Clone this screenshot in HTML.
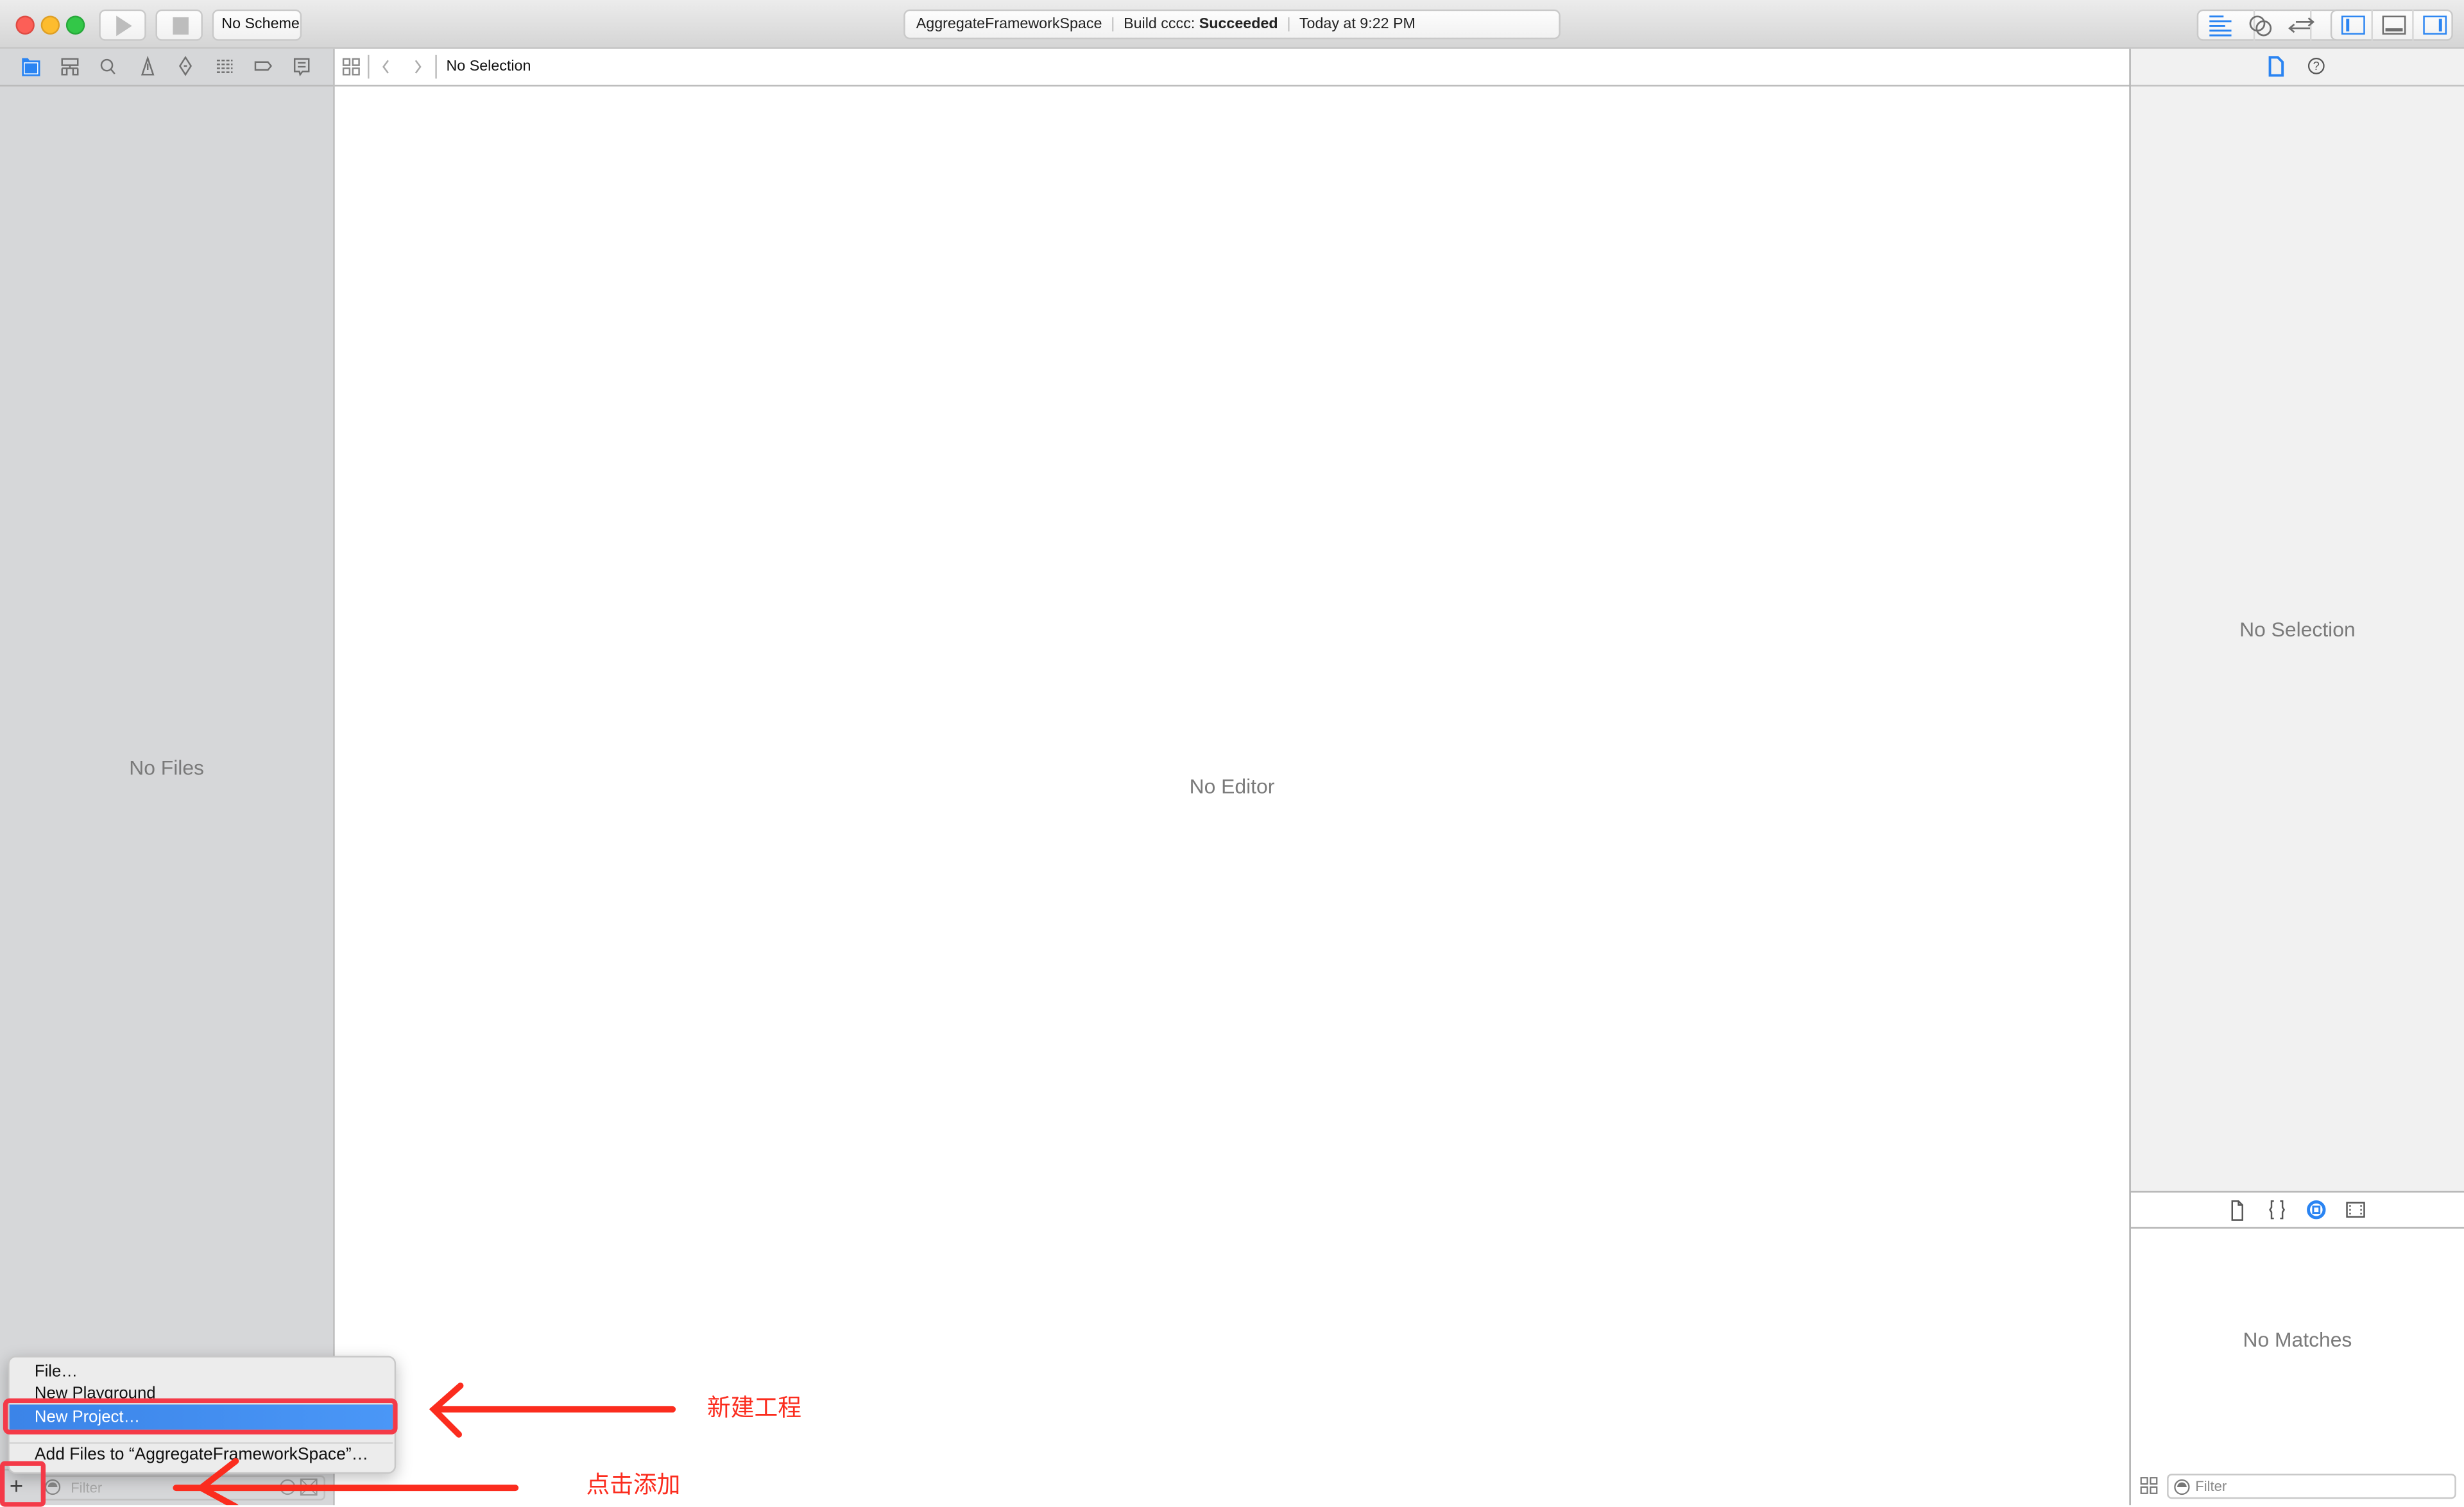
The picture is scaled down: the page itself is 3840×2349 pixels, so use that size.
<!DOCTYPE html>
<html><head><meta charset="utf-8"><style>
html,body{margin:0;padding:0;width:3840px;height:2346px;overflow:hidden;background:#fff}
#w{position:absolute;left:0;top:0;width:1568px;height:958px;transform:scale(2.44898);transform-origin:0 0;font-family:"Liberation Sans","Noto Sans CJK SC",sans-serif;}
.a{position:absolute}
.btn{position:absolute;background:linear-gradient(#fdfdfd,#f1f1f1);border:1px solid #c9c9c9;border-radius:4px;box-sizing:border-box}
.gray{color:#7a7a7a;font-size:13px}
</style></head><body><div id="w">
<!-- title bar -->
<div class="a" style="left:0;top:0;width:1568px;height:30px;background:linear-gradient(#ececec,#d5d5d5);border-bottom:1px solid #c4c4c4"></div>
<div class="a" style="left:10px;top:10px;width:10px;height:10px;border-radius:50%;background:#fc5f57;border:0.5px solid #de4a42"></div>
<div class="a" style="left:26px;top:10px;width:10px;height:10px;border-radius:50%;background:#fdbc2e;border:0.5px solid #de9f25"></div>
<div class="a" style="left:42px;top:10px;width:10px;height:10px;border-radius:50%;background:#33c748;border:0.5px solid #27a83a"></div>
<div class="btn" style="left:63px;top:6px;width:30px;height:20px"><svg class="a" style="left:9px;top:3px" width="12" height="13"><path d="M1 0 L11 6.5 L1 13Z" fill="#bdbdbd"/></svg></div>
<div class="btn" style="left:99px;top:6px;width:30px;height:20px"><div class="a" style="left:10px;top:4px;width:10px;height:11px;background:#bdbdbd"></div></div>
<div class="btn" style="left:135px;top:6px;width:57px;height:20px;font-size:9.5px;line-height:18px;padding-left:5px;color:#111;white-space:nowrap;overflow:hidden">No Scheme</div>
<div class="btn" style="left:575px;top:6px;width:418px;height:19px;font-size:9.5px;line-height:18px;padding-left:7px;color:#222;white-space:nowrap">AggregateFrameworkSpace <span style="color:#bbb;margin:0 3px">|</span> Build cccc: <b>Succeeded</b> <span style="color:#bbb;margin:0 3px">|</span> Today at 9:22 PM</div>
<div class="btn" style="left:1398px;top:6px;width:109px;height:20px"></div>
<div class="a" style="left:1434px;top:6px;width:1px;height:20px;background:#d6d6d6"></div>
<div class="a" style="left:1470px;top:6px;width:1px;height:20px;background:#d6d6d6"></div>
<svg class="a" style="left:1404px;top:9px" width="20" height="15"><g stroke="#2a84f2" stroke-width="1.2"><path d="M2 1.5h9M2 4.5h14M2 7.5h10M2 10.5h14M2 13.5h14"/></g></svg>
<svg class="a" style="left:1430px;top:7px" width="18" height="18"><g fill="none" stroke="#6e6e6e" stroke-width="1.1"><circle cx="6.5" cy="8" r="4.5"/><circle cx="10.5" cy="11" r="4.5"/></g></svg>
<svg class="a" style="left:1456px;top:8px" width="18" height="16"><g fill="none" stroke="#6e6e6e" stroke-width="1.1"><path d="M5 10h13M8 12.5l-3-2.5 3-2.5" transform="translate(-4 0)"/><path d="M5 6h11M13 3.5l3 2.5-3 2.5"/></g></svg>
<div class="btn" style="left:1483px;top:6px;width:78px;height:20px"></div>
<div class="a" style="left:1509px;top:6px;width:1px;height:20px;background:#d6d6d6"></div>
<div class="a" style="left:1535px;top:6px;width:1px;height:20px;background:#d6d6d6"></div>
<div class="a" style="left:1490px;top:10px;width:13px;height:10px;border:1.2px solid #2a84f2"></div><div class="a" style="left:1493px;top:12px;width:2px;height:8px;background:#2a84f2"></div>
<div class="a" style="left:1516px;top:10px;width:13px;height:10px;border:1.2px solid #6e6e6e"></div><div class="a" style="left:1518px;top:18px;width:11px;height:2px;background:#6e6e6e"></div>
<div class="a" style="left:1542px;top:10px;width:13px;height:10px;border:1.2px solid #2a84f2"></div><div class="a" style="left:1552px;top:12px;width:2px;height:8px;background:#2a84f2"></div>

<!-- sidebar -->
<div class="a" style="left:0;top:31px;width:212px;height:927px;background:#d6d7d9;border-right:1px solid #bdbdbd"></div>
<div class="a" style="left:0;top:54px;width:212px;height:1px;background:#b9b9b9"></div>
<svg class="a" style="left:0;top:31px" width="212" height="23"><g fill="none" stroke="#707070" stroke-width="1">
<path d="M14.5 6.5h3l1 1.5h6.5v9h-10.5z" fill="#2a84f2" stroke="#2a84f2"/><rect x="15.5" y="9" width="8.5" height="7" fill="#2a84f2" stroke="#fff" stroke-width="0.6"/>
<path d="M39.5 6.5h10v4h-10zM44.5 10.5v2M39.5 12.5h10M39.5 12.5v4h3v-4M46.5 12.5v4h3v-4"/>
<circle cx="68" cy="10.5" r="3.5"/><path d="M70.5 13l2.5 3"/>
<path d="M94 6l3.5 10.5h-7zM94 9.5v4"/>
<path d="M118 5.5l3.5 5.5-3.5 5.5-3.5-5.5zM117 11h2"/>
<path d="M138 7.5h10M138 10h10M138 12.5h10M138 15h10" stroke-dasharray="2 1"/>
<path d="M162.5 8.5h8l2 2.5-2 2.5h-8z"/>
<path d="M187.5 6.5h9v8h-4l-1.5 2-0.5-2h-3zM189.5 9h5M189.5 11.5h5"/>
</g></svg>
<div class="a gray" style="left:0;width:212px;top:481px;text-align:center">No Files</div>

<!-- editor -->
<div class="a" style="left:213px;top:54px;width:1142px;height:1px;background:#b9b9b9"></div>
<svg class="a" style="left:213px;top:31px" width="140" height="23"><g fill="none" stroke="#8a8a8a" stroke-width="1">
<path d="M5.5 6.5h4v4h-4zM11.5 6.5h4v4h-4zM5.5 12.5h4v4h-4zM11.5 12.5h4v4h-4z"/>
<path d="M21.5 4v15M64.5 4v15" stroke="#bbb"/>
<path d="M34 7.5l-3 4 3 4M51.5 7.5l3 4-3 4" stroke="#aaa"/></g></svg>
<div class="a" style="left:284px;top:37px;font-size:9.5px;color:#111">No Selection</div>
<div class="a gray" style="left:213px;width:1142px;top:493px;text-align:center">No Editor</div>

<!-- inspector -->
<div class="a" style="left:1355px;top:31px;width:1px;height:927px;background:#ababab"></div>
<div class="a" style="left:1356px;top:31px;width:212px;height:727px;background:#f1f1f1"></div>
<div class="a" style="left:1356px;top:54px;width:212px;height:1px;background:#c0c0c0"></div>
<svg class="a" style="left:1440px;top:34px" width="45" height="16"><path d="M4.5 2.5h5l3 3v8.5h-8z" fill="none" stroke="#2a84f2" stroke-width="1.6"/><circle cx="34" cy="8" r="4.8" fill="none" stroke="#555" stroke-width="0.9"/><text x="34" y="10.6" font-size="7.5" text-anchor="middle" fill="#555" font-family="Liberation Sans">?</text></svg>
<div class="a gray" style="left:1356px;width:212px;top:393px;text-align:center">No Selection</div>
<div class="a" style="left:1356px;top:758px;width:212px;height:1px;background:#b3b3b3"></div>
<div class="a" style="left:1356px;top:781px;width:212px;height:1px;background:#b3b3b3"></div>
<svg class="a" style="left:1410px;top:762px" width="100" height="16"><g fill="none" stroke="#555" stroke-width="1">
<path d="M10.5 2.5h4l2.5 2.5v9.5h-6.5zM14.5 2.5v2.5h2.5"/>
<path d="M37 2.5h-1.5v4l-1 1.5 1 1.5v4h1.5M41 2.5h1.5v4l1 1.5-1 1.5v4h-1.5"/>
<circle cx="64" cy="8" r="5" stroke="#2a84f2" stroke-width="2"/><rect x="62" y="6" width="4" height="4" stroke="#2a84f2" stroke-width="1.2"/>
<rect x="83.5" y="3.5" width="11" height="9"/><path d="M85 5.5h1M85 8h1M85 10.5h1M92 5.5h1M92 8h1M92 10.5h1"/></g></svg>
<div class="a gray" style="left:1356px;width:212px;top:845px;text-align:center">No Matches</div>
<svg class="a" style="left:1362px;top:940px" width="12" height="12"><g fill="none" stroke="#777" stroke-width="0.9"><rect x="0.5" y="0.5" width="4" height="4"/><rect x="6.5" y="0.5" width="4" height="4"/><rect x="0.5" y="6.5" width="4" height="4"/><rect x="6.5" y="6.5" width="4" height="4"/></g></svg>
<div class="a" style="left:1379px;top:938px;width:184px;height:16px;border:1px solid #c8c8c8;border-radius:3px;box-sizing:border-box;font-size:9px;color:#888;line-height:14px;padding-left:17px">Filter</div>
<svg class="a" style="left:1383px;top:941px" width="11" height="11"><circle cx="5.5" cy="5.5" r="4.5" fill="none" stroke="#777" stroke-width="0.9"/><path d="M2.5 5.5a3 3 0 0 1 6 0z" fill="#777"/></svg>

<!-- sidebar bottom bar -->
<div class="a" style="left:0;top:935px;width:212px;height:1px;background:#c0c0c0"></div>
<div class="a" style="left:6px;top:942px;font-size:15px;color:#444;line-height:10px">+</div>
<div class="a" style="left:26px;top:939px;width:181px;height:16px;border:1px solid #c0c0c0;border-radius:3px;box-sizing:border-box;font-size:9px;color:#aaa;line-height:14px;padding-left:18px">Filter</div>
<svg class="a" style="left:28px;top:941px" width="180" height="12"><circle cx="5.5" cy="5.5" r="4.5" fill="none" stroke="#888" stroke-width="0.9"/><path d="M2.5 5.5a3 3 0 0 1 6 0z" fill="#888"/><circle cx="155" cy="5.5" r="4.5" fill="none" stroke="#999" stroke-width="0.9"/><rect x="163.5" y="0.5" width="10" height="10" fill="none" stroke="#999" stroke-width="0.9"/><path d="M163.5 0.5l10 10M173.5 0.5l-10 10" stroke="#999" stroke-width="0.7"/></svg>

<!-- popup menu -->
<div class="a" style="left:5px;top:863px;width:247px;height:75px;background:#ececec;border:1px solid #c8c8c8;border-radius:5px;box-sizing:border-box;box-shadow:0 3px 10px rgba(0,0,0,0.25)"></div>
<div class="a" style="left:22px;top:867px;font-size:10.5px;color:#111">File…</div>
<div class="a" style="left:22px;top:881px;font-size:10.5px;color:#111">New Playground</div>
<div class="a" style="left:6px;top:891px;width:244px;height:21px;background:#dcdcdc"></div>
<div class="a" style="left:6px;top:894px;width:244px;height:16px;background:linear-gradient(90deg,#3b84e8,#4a97f7);color:#fff;font-size:10.5px;line-height:16px;padding-left:16px;box-sizing:border-box">New Project…</div>
<div class="a" style="left:2px;top:890px;width:251px;height:23px;border:3px solid #f43a48;border-radius:4px;box-sizing:border-box"></div>
<div class="a" style="left:6px;top:918px;width:244px;height:1px;background:#d4d4d4"></div>
<div class="a" style="left:22px;top:920px;font-size:10.8px;color:#111;white-space:nowrap">Add Files to “AggregateFrameworkSpace”…</div>
<div class="a" style="left:0;top:930px;width:29px;height:29px;border:3px solid #f43a48;border-radius:3px;box-sizing:border-box"></div>

<!-- arrows -->
<svg class="a" style="left:0;top:860px" width="450" height="98"><g stroke="#fb2c1e" stroke-width="4" stroke-linecap="round" fill="none">
<path d="M428 37H276M293 22L276 37l16 16"/>
<path d="M328 87H112M150 70L128 87l22 12"/></g></svg>
<div class="a" style="left:450px;top:885px;font-size:15px;color:#fb2c1e">新建工程</div>
<div class="a" style="left:373px;top:934px;font-size:15px;color:#fb2c1e">点击添加</div>
</div></body></html>
